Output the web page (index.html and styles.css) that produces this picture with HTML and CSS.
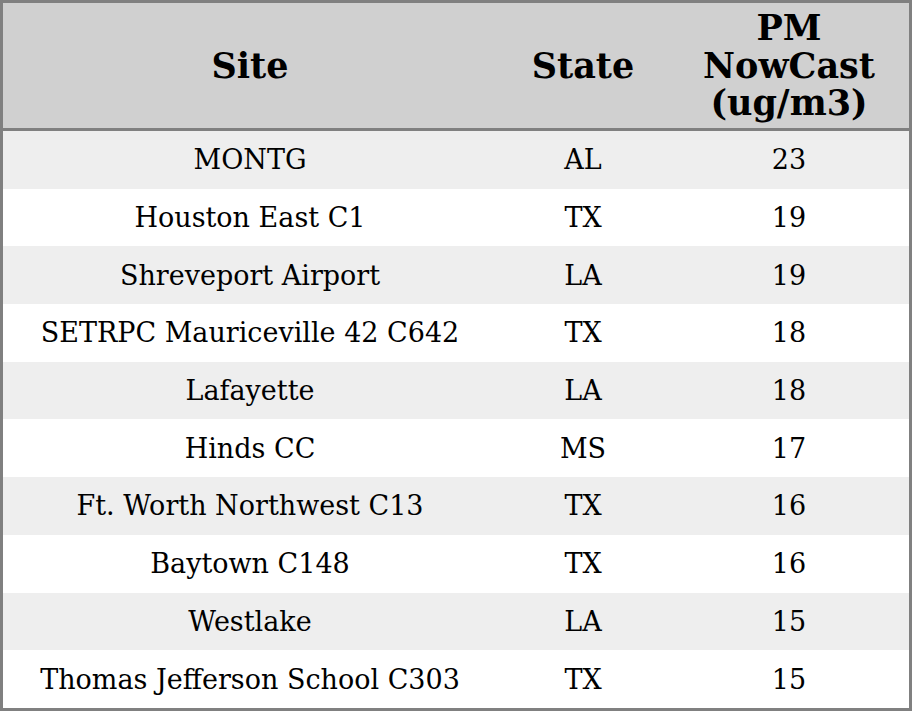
FILE: index.html
```html
<!DOCTYPE html>
<html>
<head>
<meta charset="utf-8">
<link rel="stylesheet" href="styles.css">
</head>
<body>
<table class="aq">
  <colgroup>
    <col class="c-site">
    <col class="c-state">
    <col class="c-pm">
  </colgroup>
  <thead>
    <tr><th>Site</th><th>State</th><th>PM<br>NowCast<br>(ug/m3)</th></tr>
  </thead>
  <tbody>
    <tr><td>MONTG</td><td>AL</td><td>23</td></tr>
    <tr><td>Houston East C1</td><td>TX</td><td>19</td></tr>
    <tr><td>Shreveport Airport</td><td>LA</td><td>19</td></tr>
    <tr><td>SETRPC Mauriceville 42 C642</td><td>TX</td><td>18</td></tr>
    <tr><td>Lafayette</td><td>LA</td><td>18</td></tr>
    <tr><td>Hinds CC</td><td>MS</td><td>17</td></tr>
    <tr><td>Ft. Worth Northwest C13</td><td>TX</td><td>16</td></tr>
    <tr><td>Baytown C148</td><td>TX</td><td>16</td></tr>
    <tr><td>Westlake</td><td>LA</td><td>15</td></tr>
    <tr><td>Thomas Jefferson School C303</td><td>TX</td><td>15</td></tr>
  </tbody>
</table>
</body>
</html>
```
FILE: styles.css
```css
html, body {
  margin: 0;
  padding: 0;
  background: #ffffff;
}
.aq {
  width: 912px;
  border-collapse: separate;
  border-spacing: 0;
  border: 3px solid #808080;
  table-layout: fixed;
  font-family: "DejaVu Serif", serif;
  color: #000;
}
.c-site { width: 494px; }
.c-state { width: 172px; }
.c-pm { width: 240px; }
.aq th {
  background: #d0d0d0;
  font-size: 35px;
  font-weight: bold;
  line-height: 37.5px;
  height: 128px;
  padding: 0;
  text-align: center;
  vertical-align: middle;
  border-bottom: 3px solid #808080;
  box-sizing: border-box;
}
.aq td {
  font-size: 27px;
  height: 57.7px;
  padding: 0;
  text-align: center;
  vertical-align: middle;
}
.aq tbody tr:nth-child(odd) td {
  background: #eeeeee;
}
.aq tbody tr:nth-child(even) td {
  background: #ffffff;
}
```
